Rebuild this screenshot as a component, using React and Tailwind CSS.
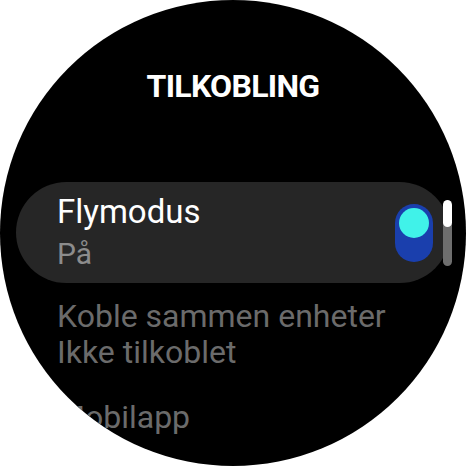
export default function App() {
  return (
    <div className="w-[466px] h-[466px] bg-white">
      <div
        className="relative w-[466px] h-[466px] rounded-full bg-black overflow-hidden flex flex-col"
        style={{ fontFamily: "Roboto, 'Noto Sans', sans-serif" }}
      >
        <div className="pt-[67px] text-center text-white font-bold text-[32px] leading-[38px] tracking-[-0.7px]">
          TILKOBLING
        </div>
        <div className="mt-[77px] mx-[16px] h-[101px] rounded-full bg-[#262626] flex items-center justify-between pl-[41px] pr-[17px]">
          <div className="flex flex-col">
            <div className="text-[33px] leading-[38px] text-white">Flymodus</div>
            <div className="mt-[4px] text-[30px] leading-[38px] text-[#8c8c8c]">På</div>
          </div>
          <div className="w-[38px] h-[58px] rounded-full bg-[#1a3fad] flex justify-center pt-[4px]">
            <div className="w-[30px] h-[30px] rounded-full bg-[#40f2e9]" />
          </div>
        </div>
        <div className="mt-[15px] pl-[57px] text-[32px] leading-[36px] text-[#6b6b6b]">
          <div>Koble sammen enheter</div>
          <div>Ikke tilkoblet</div>
          <div className="mt-[29px]">Mobilapp</div>
        </div>
        <div className="absolute left-[443px] top-[200px] w-[9px] h-[66px] rounded-full bg-[#6e6e6e] overflow-hidden">
          <div className="w-full h-[27px] rounded-full bg-white" />
        </div>
      </div>
    </div>
  );
}
